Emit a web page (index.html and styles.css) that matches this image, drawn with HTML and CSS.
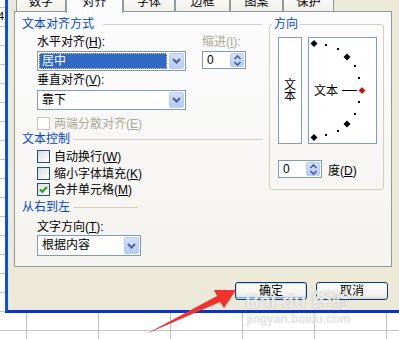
FILE: index.html
```html
<!DOCTYPE html>
<html lang="zh-CN">
<head>
  <meta charset="UTF-8" />
  <title>单元格格式 - 对齐</title>
  <link rel="stylesheet" href="styles.css">
</head>
<body>
  <div class="cell-peek">4</div>

  <div class="dialog">
    <div class="tabs">
      <div class="tab">数字</div>
      <div class="tab active">对齐</div>
      <div class="tab">字体</div>
      <div class="tab">边框</div>
      <div class="tab">图案</div>
      <div class="tab">保护</div>
    </div>

    <div class="panel">
      <div class="col-left">
        <div class="sec-title t1">文本对齐方式</div>
        <div class="indent">
          <div class="align-grid">
            <div class="field field-main">
              <div class="lbl lbl-first">水平对齐(<u>H</u>):</div>
              <div class="select sel-wide sel-first">
                <div class="value focused">居中</div>
                <div class="drop"><svg width="9" height="6" viewBox="0 0 9 6"><path d="M1 1l3.5 3.5L8 1" fill="none" stroke="#4d6185" stroke-width="2"/></svg></div>
              </div>
              <div class="lbl lbl-second">垂直对齐(<u>V</u>):</div>
              <div class="select sel-wide sel-second">
                <div class="value">靠下</div>
                <div class="drop"><svg width="9" height="6" viewBox="0 0 9 6"><path d="M1 1l3.5 3.5L8 1" fill="none" stroke="#4d6185" stroke-width="2"/></svg></div>
              </div>
            </div>
            <div class="field">
              <div class="lbl lbl-first disabled">缩进(<u>I</u>):</div>
              <div class="spin sel-first">
                <div class="spin-value">0</div>
                <div class="spin-btn">
                  <svg width="9" height="13" viewBox="0 0 9 13"><path d="M1.5 5l3-3 3 3M1.5 8l3 3 3-3" fill="none" stroke="#4d6185" stroke-width="1.6"/></svg>
                </div>
              </div>
            </div>
          </div>
          <div class="check check-dis disabled">
            <span class="box"></span><span>两端分散对齐(<u>E</u>)</span>
          </div>
        </div>

        <div class="sec-title t2">文本控制</div>
        <div class="indent">
          <div class="check check-a"><span class="box"></span><span>自动换行(<u>W</u>)</span></div>
          <div class="check check-b"><span class="box"></span><span>缩小字体填充(<u>K</u>)</span></div>
          <div class="check check-c">
            <span class="box"><svg width="11" height="11" viewBox="0 0 11 11"><path d="M2 5.5l2.3 2.3L9 3" fill="none" stroke="#21a121" stroke-width="2.2"/></svg></span><span>合并单元格(<u>M</u>)</span>
          </div>
        </div>

        <div class="sec-title t3">从右到左</div>
        <div class="indent">
          <div class="lbl lbl-dir">文字方向(<u>T</u>):</div>
          <div class="select sel-dir">
            <div class="value">根据内容</div>
            <div class="drop"><svg width="9" height="6" viewBox="0 0 9 6"><path d="M1 1l3.5 3.5L8 1" fill="none" stroke="#4d6185" stroke-width="2"/></svg></div>
          </div>
        </div>
      </div>

      <fieldset class="orient">
        <legend>方向</legend>
        <div class="orient-boxes">
          <div class="vbox"><span>文</span><span>本</span></div>
          <div class="dial">
            <svg width="67" height="105" viewBox="0 0 67 105">
              <text x="5" y="57" class="dial-text">文本</text>
              <line x1="33" y1="52.5" x2="48" y2="52.5" stroke="#000" stroke-width="1"/>
              <g fill="#000">
                <path d="M5 2l3.5 3.5L5 9 1.5 5.5z"/>
                <path d="M38 15.5l3.5 3.5-3.5 3.5-3.5-3.5z"/>
                <path d="M38 82.5l3.5 3.5-3.5 3.5-3.5-3.5z"/>
                <path d="M5 96l3.5 3.5L5 103l-3.5-3.5z"/>
                <rect x="16" y="6" width="2" height="2"/>
                <rect x="28" y="10" width="2" height="2"/>
                <rect x="45" y="27" width="2" height="2"/>
                <rect x="49" y="39" width="2" height="2"/>
                <rect x="49" y="63" width="2" height="2"/>
                <rect x="45" y="75" width="2" height="2"/>
                <rect x="28" y="92" width="2" height="2"/>
                <rect x="16" y="96" width="2" height="2"/>
              </g>
              <path d="M53 49.5l3 3-3 3-3-3z" fill="#e00000" stroke="#600" stroke-width="0.5"/>
            </svg>
          </div>
        </div>
        <div class="deg-row">
          <div class="spin">
            <div class="spin-value">0</div>
            <div class="spin-btn">
              <svg width="9" height="13" viewBox="0 0 9 13"><path d="M1.5 5l3-3 3 3M1.5 8l3 3 3-3" fill="none" stroke="#4d6185" stroke-width="1.6"/></svg>
            </div>
          </div>
          <span>度(<u>D</u>)</span>
        </div>
      </fieldset>
    </div>

    <div class="actions">
      <button class="btn default">确定</button>
      <button class="btn">取消</button>
    </div>
  </div>

  <div class="watermark">
    <div class="wm-big">Bai du 经验</div>
    <div class="wm-small">jingyan.baidu.com</div>
  </div>

  <svg class="arrow" width="399" height="339" viewBox="0 0 399 339">
    <path d="M146 334 L217 296 L214 290 L236 290 L224 308 L220 302 Z" fill="#f2322e"/>
  </svg>
</body>
</html>
```

FILE: styles.css
```css
* {
  box-sizing: border-box;
}

html, body {
  margin: 0;
  padding: 0;
}

body {
  width: 399px;
  height: 339px;
  overflow: hidden;
  position: relative;
  font-family: "Liberation Sans", "Noto Sans CJK SC", sans-serif;
  font-size: 12px;
  color: #000;
  background:
    linear-gradient(90deg, #c4c4c4 1px, transparent 1px) 26px 0 / 72px 100%,
    linear-gradient(#c4c4c4 1px, transparent 1px) 0 7px / 100% 19px,
    #fff;
}

u {
  text-decoration: underline;
  text-underline-offset: 1px;
}

.cell-peek {
  position: absolute;
  left: -2px;
  top: 11px;
  font-size: 11px;
  line-height: 11px;
}

/* dialog frame */
.dialog {
  margin-left: 5px;
  width: 394px;
  height: 313px;
  background: #ece9d8;
  border-left: 3px solid #0a4fe6;
  border-bottom: 3px solid #0a34c8;
  padding-left: 6px;
}

.tabs {
  display: flex;
  height: 11px;
  margin-left: 2px;
}

.tab {
  height: 21px;
  margin-top: -10px;
  padding-top: 5px;
  line-height: 12px;
  text-align: center;
  border: 1px solid #919b9c;
  border-bottom: none;
  border-radius: 3px 3px 0 0;
  background: linear-gradient(#ffffff, #f1f0ea);
}
.tab:nth-child(1) { width: 50px; }
.tab:nth-child(2) { width: 57px; }
.tab:nth-child(3) { width: 52px; }
.tab:nth-child(4) { width: 55px; }
.tab:nth-child(5) { width: 53px; }
.tab:nth-child(6) { width: 51px; }

.tab.active {
  height: 23px;
  background: #fcfcfe;
  position: relative;
  z-index: 1;
}

.panel {
  width: 378px;
  height: 256px;
  border: 1px solid #919b9c;
  background: linear-gradient(#fcfcfe, #f4f3ee);
  display: flex;
  align-items: flex-start;
  padding: 6px 0 0 7px;
}

.col-left {
  width: 240px;
}

.sec-title {
  display: flex;
  align-items: center;
  height: 12px;
  line-height: 12px;
  color: #0046d5;
}
.sec-title::after {
  content: "";
  flex: 1;
  height: 1px;
  background: #d0d0bf;
}
.t1::after { margin-left: 9px; }
.t2 { margin-top: 3px; }
.t2::after { margin-left: 3px; }
.t3 { margin-top: 5px; width: 116px; }
.t3::after { margin-left: 4px; }

.indent {
  margin-left: 15px;
}

.align-grid {
  display: flex;
}
.field-main {
  width: 165px;
}

.lbl {
  height: 12px;
  line-height: 12px;
  white-space: nowrap;
}
.lbl-first { margin-top: 6px; }
.lbl-second { margin-top: 3px; }
.lbl-dir { margin-top: 8px; }

.disabled {
  color: #aca899;
}

/* combo boxes */
.select {
  display: flex;
  height: 20px;
  padding: 1px;
  border: 1px solid #7f9db9;
  background: #fff;
}
.sel-wide { width: 149px; }
.sel-first { margin-top: 3px; }
.sel-second { margin-top: 4px; }
.sel-dir {
  width: 104px;
  height: 21px;
  margin-top: 2px;
}

.value {
  flex: 1;
  margin-right: 2px;
  padding-left: 3px;
  line-height: 16px;
}
.value.focused {
  background: #316ac5;
  color: #fff;
  outline: 1px dotted #f2cf74;
  outline-offset: -1px;
}

.drop {
  width: 15px;
  border: 1px solid #b9cdfc;
  border-radius: 2px;
  background: linear-gradient(#d3e0fd, #b6cbf8);
  display: flex;
  align-items: center;
  justify-content: center;
}

/* spinners */
.spin {
  display: flex;
  width: 44px;
  height: 18px;
  padding: 1px;
  border: 1px solid #7f9db9;
  background: #fff;
}
.spin-value {
  flex: 1;
  padding-left: 3px;
  line-height: 14px;
}
.spin-btn {
  width: 14px;
  border: 1px solid #b9cdfc;
  border-radius: 2px;
  background: linear-gradient(#d3e0fd, #b6cbf8);
  display: flex;
  align-items: center;
  justify-content: center;
}

/* check boxes */
.check {
  display: flex;
  align-items: center;
  gap: 4px;
  height: 13px;
  line-height: 12px;
  white-space: nowrap;
}
.check-dis { margin-top: 7px; }
.check-a { margin-top: 5px; }
.check-b { margin-top: 4px; }
.check-c { margin-top: 3px; }

.box {
  width: 13px;
  height: 13px;
  border: 1px solid #1c5180;
  background: linear-gradient(135deg, #dcdcd7, #ffffff);
  display: flex;
  align-items: center;
  justify-content: center;
}
.check-dis .box {
  border-color: #cac8bb;
  background: #fff;
}

/* orientation group */
.orient {
  margin: 0 0 0 7px;
  min-width: 0;
  width: 115px;
  border: 1px solid #d0d0bf;
  border-radius: 3px;
  padding: 7px 0 11px 8px;
}
.orient legend {
  padding: 0 2px;
  margin-left: -6px;
  line-height: 12px;
  color: #0046d5;
}

.orient-boxes {
  display: flex;
  gap: 6px;
  height: 107px;
}

.vbox {
  width: 24px;
  border: 1px solid #7f9db9;
  background: #fff;
  display: flex;
  flex-direction: column;
  align-items: center;
  justify-content: center;
  line-height: 11px;
}

.dial {
  width: 69px;
  border: 1px solid #7f9db9;
  background: #fff;
}
.dial svg {
  display: block;
}
.dial-text {
  font-family: "Noto Sans CJK SC", sans-serif;
  font-size: 12px;
}

.deg-row {
  margin-top: 16px;
  display: flex;
  align-items: center;
  gap: 6px;
}

/* buttons */
.actions {
  width: 378px;
  margin-top: 15px;
  padding-right: 4px;
  display: flex;
  justify-content: flex-end;
  gap: 9px;
}

.btn {
  width: 72px;
  height: 18px;
  padding: 0;
  font-family: inherit;
  font-size: 12px;
  line-height: 16px;
  color: #000;
  border: 1px solid #003c74;
  border-radius: 3px;
  background: linear-gradient(#ffffff, #f0efea 80%, #d8d2c6);
}
.btn.default {
  box-shadow: inset 0 0 0 1px #c6d8fc, inset 0 -2px 0 0 #7fa2ec;
}

/* overlays */
.watermark {
  position: absolute;
  left: 245px;
  top: 290px;
  color: rgba(255, 255, 255, 0.8);
  text-shadow: 0 0 1px rgba(110, 110, 110, 0.6);
  font-family: "Liberation Sans", "Noto Sans CJK SC", sans-serif;
  pointer-events: none;
}
.wm-big {
  font-size: 20px;
  line-height: 23px;
  font-weight: bold;
}
.wm-small {
  font-size: 12px;
  line-height: 13px;
  margin-left: 2px;
  letter-spacing: 0.4px;
}

.arrow {
  position: absolute;
  left: 0;
  top: 0;
  pointer-events: none;
}
```
